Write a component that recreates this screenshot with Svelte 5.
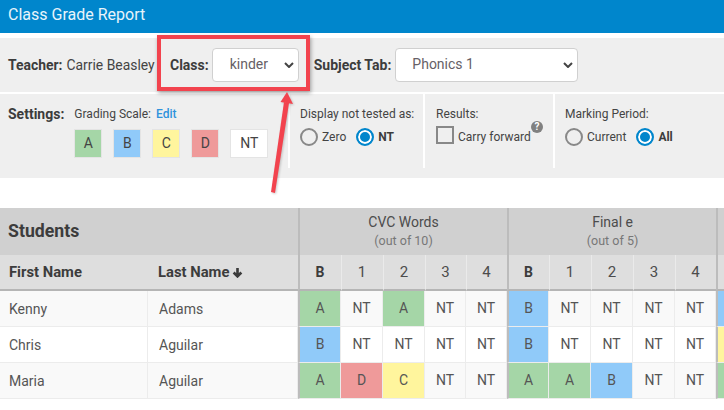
<script>
	const scale = [
		{ label: "A", cls: "a" },
		{ label: "B", cls: "b" },
		{ label: "C", cls: "c" },
		{ label: "D", cls: "d" },
		{ label: "NT", cls: "nt" },
	];
	const students = [
		{ first: "Kenny", last: "Adams", cvc: ["A", "NT", "A", "NT", "NT"], fin: ["B", "NT", "NT", "NT", "NT"], next: "B" },
		{ first: "Chris", last: "Aguilar", cvc: ["B", "NT", "NT", "NT", "NT"], fin: ["B", "NT", "NT", "NT", "NT"], next: "C" },
		{ first: "Maria", last: "Aguilar", cvc: ["A", "D", "C", "NT", "NT"], fin: ["A", "A", "B", "NT", "NT"], next: "A" },
	];
	const cols = ["B", "1", "2", "3", "4"];
	const cvcWidths = [43, 42, 42, 41, 41];
	const finWidths = [42, 42, 42, 42, 41];
	const gradeClass = (g) => (g === "NT" ? "" : g.toLowerCase());
</script>

<main>
	<header class="title">Class Grade Report</header>

	<div class="filters">
		<span class="field teacher"><b>Teacher:</b> Carrie Beasley</span>
		<span class="field"><b>Class:</b><span class="select small">kinder<svg class="chev" viewBox="0 0 10 6"><path d="M1 1l4 4 4-4" /></svg></span></span>
		<span class="field"><b>Subject Tab:</b><span class="select wide">Phonics 1<svg class="chev" viewBox="0 0 10 6"><path d="M1 1l4 4 4-4" /></svg></span></span>
	</div>

	<div class="settings">
		<section class="grading">
			<b class="settings-label">Settings:</b>
			<div>
				<div class="caption">Grading Scale: <a href="#edit">Edit</a></div>
				<div class="swatches">
					{#each scale as s}
						<span class="swatch {s.cls}">{s.label}</span>
					{/each}
				</div>
			</div>
		</section>
		<section class="display">
			<div class="caption">Display not tested as:</div>
			<div class="radios">
				<span class="radio"></span><span>Zero</span>
				<span class="radio on"></span><b>NT</b>
			</div>
		</section>
		<section class="results">
			<div class="caption">Results:</div>
			<div class="carry">
				<span class="check"></span><span class="carry-label">Carry forward</span>
				<span class="help">?</span>
			</div>
		</section>
		<section class="period">
			<div class="caption">Marking Period:</div>
			<div class="radios">
				<span class="radio"></span><span>Current</span>
				<span class="radio on"></span><b>All</b>
			</div>
		</section>
	</div>

	<div class="table-wrap">
		<table>
			<colgroup>
				<col style:width="148px" />
				<col style:width="150px" />
				{#each cvcWidths as w}<col style:width="{w}px" />{/each}
				{#each finWidths as w}<col style:width="{w}px" />{/each}
				<col style:width="42px" />
			</colgroup>
			<thead>
				<tr class="groups">
					<th colspan="2" class="students">Students</th>
					<th colspan="5" class="group">CVC Words<small>(out of 10)</small></th>
					<th colspan="5" class="group">Final e<small>(out of 5)</small></th>
					<th class="group"></th>
				</tr>
				<tr class="names">
					<th class="name">First Name</th>
					<th class="name last">Last Name<svg class="sort" viewBox="0 0 10 10"><path d="M5 1v7M1.5 5L5 8.5 8.5 5" /></svg></th>
					{#each cols as c, i}<th class="num" class:bold={i === 0} class:start={i === 0}>{c}</th>{/each}
					{#each cols as c, i}<th class="num" class:bold={i === 0} class:start={i === 0}>{c}</th>{/each}
					<th class="num start"></th>
				</tr>
			</thead>
			<tbody>
				{#each students as s}
					<tr>
						<td class="person">{s.first}</td>
						<td class="person surname">{s.last}</td>
						{#each s.cvc as g, i}<td class="grade {gradeClass(g)}" class:start={i === 0}>{g}</td>{/each}
						{#each s.fin as g, i}<td class="grade {gradeClass(g)}" class:start={i === 0}>{g}</td>{/each}
						<td class="grade start {gradeClass(s.next)}"></td>
					</tr>
				{/each}
			</tbody>
		</table>
	</div>

	<!-- annotation drawn over the screenshot -->
	<div class="highlight"></div>
	<svg class="arrow" width="40" height="110" viewBox="0 0 40 110">
		<path d="M8 101L12 102L26 12L21 11Z" fill="#f2434e" />
		<path d="M24 1L30 13L17.5 11Z" fill="#f2434e" />
	</svg>
</main>

<style>
	:global(body) {
		margin: 0;
		background: #fff;
	}
	main {
		position: relative;
		width: 724px;
		height: 410px;
		overflow: hidden;
		font-family: Roboto, "Liberation Sans", sans-serif;
		font-size: 14px;
		color: #444;
	}
	.title {
		height: 33px;
		line-height: 29px;
		padding-left: 8px;
		background: #0086cc;
		color: #e8f4fb;
		font-size: 16px;
	}
	.filters {
		display: flex;
		align-items: center;
		height: 54px;
		margin-top: 5px;
		padding: 0 0 1px 8px;
		box-sizing: border-box;
		background: #efefef;
	}
	.field {
		display: flex;
		align-items: center;
		gap: 4px;
		white-space: nowrap;
	}
	.teacher {
		width: 162px;
		font-size: 13.9px;
	}
	b {
		color: #3c3c3c;
		font-weight: 700;
	}
	.select {
		position: relative;
		box-sizing: border-box;
		height: 34px;
		line-height: 31px;
		background: #fff;
		border: 1px solid #d0d0d0;
		border-radius: 4px;
		color: #665f66;
		font-size: 14px;
	}
	.small {
		width: 87px;
		margin: 0 15px 0 -1px;
		padding-left: 17px;
	}
	.wide {
		width: 183px;
		padding-left: 16px;
	}
	.chev {
		position: absolute;
		right: 4px;
		top: 13px;
		width: 10px;
		height: 6px;
		fill: none;
		stroke: #444;
		stroke-width: 2;
	}
	.settings {
		display: flex;
		height: 84px;
		margin-top: 2px;
		background: #efefef;
		font-size: 12px;
	}
	.settings section {
		box-sizing: border-box;
		height: 74px;
		padding-top: 12px;
		border-right: 2px solid #fff;
	}
	.grading {
		display: flex;
		gap: 10px;
		width: 290px;
		padding-left: 8px;
	}
	.settings-label {
		font-size: 14px;
		line-height: 16px;
	}
	.display {
		width: 135px;
		padding-left: 10px;
	}
	.results {
		width: 130px;
		padding-left: 11px;
	}
	.settings .period {
		border: 0;
		padding-left: 10px;
	}
	.caption {
		line-height: 16px;
	}
	.caption a {
		margin-left: 2px;
		color: #2f93dc;
		font-weight: 500;
		text-decoration: none;
	}
	.swatches {
		display: flex;
		gap: 11px;
		margin-top: 7px;
	}
	.swatch {
		box-sizing: border-box;
		width: 28px;
		height: 29px;
		line-height: 27px;
		text-align: center;
		border: 1px solid #e4e4e4;
		font-size: 14px;
	}
	.swatch.nt {
		width: 38px;
		background: #fff;
	}
	.radios {
		display: flex;
		align-items: center;
		margin-top: 6px;
		line-height: 18px;
	}
	.radios b {
		font-weight: 700;
	}
	.radio {
		box-sizing: border-box;
		width: 18px;
		height: 18px;
		margin-right: 4px;
		border: 2px solid #888;
		border-radius: 50%;
		background: #efefef;
	}
	.radio.on {
		margin-left: 10px;
		border-color: #0086cc;
		box-shadow: inset 0 0 0 2px #fff;
		background: #0086cc;
	}
	.carry {
		position: relative;
		display: flex;
		align-items: center;
		gap: 4px;
		margin-top: 4px;
	}
	.carry-label {
		margin-top: 4px;
	}
	.check {
		box-sizing: border-box;
		width: 18px;
		height: 18px;
		border: 2px solid #888;
		background: #efefef;
	}
	.help {
		position: absolute;
		left: 95px;
		top: -5px;
		width: 12px;
		height: 12px;
		line-height: 12px;
		border-radius: 50%;
		background: #808080;
		color: #fff;
		font-size: 10px;
		font-weight: 700;
		text-align: center;
	}
	.table-wrap {
		margin-top: 30px;
		width: 724px;
		overflow: hidden;
	}
	table {
		table-layout: fixed;
		width: 758px;
		border-collapse: separate;
		border-spacing: 0;
	}
	th,
	td {
		padding: 0;
		box-sizing: border-box;
		overflow: hidden;
		white-space: nowrap;
	}
	.groups th {
		height: 47px;
		background: #d0d0d0;
		font-weight: 400;
		color: #4c4c4c;
		font-size: 14px;
		line-height: 17px;
		vertical-align: top;
		padding-top: 6px;
	}
	.groups .group {
		border-left: 2px solid #bcbcbc;
	}
	.groups small {
		display: block;
		color: #777;
		font-size: 12.5px;
		line-height: 19px;
	}
	.groups .students {
		padding: 0 0 0 8px;
		vertical-align: middle;
		text-align: left;
		font-size: 17.7px;
		font-weight: 700;
		color: #3c3c3c;
	}
	.names th {
		height: 36px;
		background: #dedede;
		border-bottom: 2px solid #b5b5b5;
		font-size: 14.8px;
	}
	.name {
		padding-left: 9px;
		text-align: left;
		color: #3c3c3c;
	}
	.names .last {
		padding-left: 10px;
	}
	.sort {
		width: 11px;
		height: 11px;
		margin: 0 0 -1px 3px;
		fill: none;
		stroke: #3c3c3c;
		stroke-width: 2.4;
	}
	.names .num {
		border-left: 1px solid #eaeaea;
		padding-right: 1px;
		font-weight: 400;
		font-size: 15px;
		color: #4c4c4c;
	}
	.names .num.bold {
		font-weight: 700;
		font-size: 14px;
		color: #3c3c3c;
	}
	.names .num.start {
		border-left: 2px solid #bcbcbc;
	}
	.start {
		border-left: 2px solid #bcbcbc;
	}
	td {
		height: 36px;
		border-bottom: 1px solid #ececec;
		font-size: 14px;
	}
	tbody tr:nth-child(odd) td {
		background: #f9f9f9;
	}
	.person {
		padding-left: 9px;
		border-right: 1px solid #ececec;
		color: #555;
	}
	.surname {
		padding-left: 11px;
	}
	.grade {
		text-align: center;
		border-right: 1px solid #ececec;
		color: #555;
		padding-bottom: 2px;
	}
	tbody tr td.a,
	.swatch.a {
		background: #a5d6a7;
	}
	tbody tr td.b,
	.swatch.b {
		background: #90caf9;
	}
	tbody tr td.c,
	.swatch.c {
		background: #fff59d;
	}
	tbody tr td.d,
	.swatch.d {
		background: #ef9a9a;
	}
	.highlight {
		position: absolute;
		left: 157px;
		top: 35px;
		box-sizing: border-box;
		width: 153px;
		height: 56px;
		border: 4px solid #f2434e;
		box-shadow: 1px 2px 4px rgba(0, 0, 0, 0.35);
	}
	.arrow {
		position: absolute;
		left: 263px;
		top: 91px;
		filter: drop-shadow(1px 1px 1px rgba(0, 0, 0, 0.2));
	}
</style>
